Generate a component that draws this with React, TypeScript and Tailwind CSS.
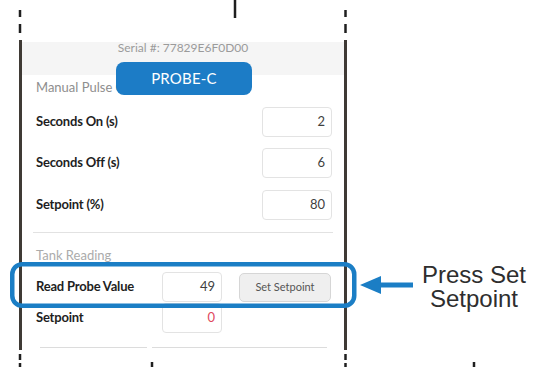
import React from "react";

const ui = { fontFamily: "Lato, 'Open Sans', sans-serif" };
const callout = { fontFamily: "'Liberation Sans', Arial, sans-serif" };

function Field({ value, red, w }: { value: string; red?: boolean; w: string }) {
  return (
    <div
      className={`${w} h-[30px] rounded-[4px] border border-[#e3e3e3] bg-white flex items-center justify-end pr-[6px] text-[13px] ${
        red ? "text-[#e0485e]" : "text-[#3f3f3f]"
      }`}
    >
      {value}
    </div>
  );
}

function Row({ label, value, mt }: { label: string; value: string; mt: string }) {
  return (
    <div className={`flex items-center justify-between h-[30px] pl-[14px] pr-[12px] ${mt}`}>
      <span className="text-[13px] font-bold text-[#1e1e1e] tracking-[-0.2px]">{label}</span>
      <Field value={value} w="w-[70px]" />
    </div>
  );
}

export default function App() {
  return (
    <div className="relative w-[543px] h-[367px] bg-white overflow-hidden flex items-start" style={ui}>
      {/* phone */}
      <div className="ml-[19px] mt-[40px] w-[328px] h-[310px] border-l-[3px] border-r-[3px] border-[#3f3a35] shrink-0">
        <div className="relative h-full">
          <div className="h-[2px]" />
          <div className="h-[33px] bg-[#f5f5f5] flex justify-center">
            <span className="text-[12px] leading-[12px] text-[#9b9b9b]">Serial #: 77829E6F0D00</span>
          </div>
          <div className="pt-[5px] pl-[14px] text-[13px] leading-[14px] text-[#8e8e8e]">Manual Pulse Control</div>
          <Row label="Seconds On (s)" value="2" mt="mt-[13px]" />
          <Row label="Seconds Off (s)" value="6" mt="mt-[11px]" />
          <Row label="Setpoint (%)" value="80" mt="mt-[12px]" />
          <div className="mt-[12px] mx-[11px] h-px bg-[#e2e2e2]" />
          <div className="mt-[15px] pl-[14px] text-[13px] leading-[14px] text-[#ababab]">Tank Reading</div>
          <div className="mt-[10px] flex items-center h-[30px] pl-[14px]">
            <span className="w-[126px] text-[13px] font-bold text-[#1e1e1e] tracking-[-0.2px]">Read Probe Value</span>
            <Field value="49" w="w-[60px]" />
            <div className="ml-[17px] w-[92px] h-[29px] rounded-[5px] border border-[#d6d6d6] bg-[#efefef] flex items-center justify-center text-[11px] text-[#555]">
              Set Setpoint
            </div>
          </div>
          <div className="mt-px flex items-center h-[30px] pl-[14px]">
            <span className="w-[126px] text-[13px] font-bold text-[#1e1e1e] tracking-[-0.2px]">Setpoint</span>
            <Field value="0" red w="w-[60px]" />
          </div>
          <div className="mt-[14px] flex">
            <div className="ml-[18px] w-[107px] h-px bg-[#dcdcdc]" />
            <div className="ml-[5px] w-[175px] h-px bg-[#dcdcdc]" />
          </div>

          {/* floating device tag */}
          <div className="absolute left-[94px] top-[22px] w-[136px] h-[33px] rounded-[8px] bg-[#1c7cc6] flex items-center justify-center text-white text-[15px] tracking-[0.2px]">
            PROBE-C
          </div>
        </div>
      </div>

      {/* callout text */}
      <div
        className="ml-[63px] mt-[263px] w-[128px] shrink-0 whitespace-nowrap text-center text-[24px] leading-[24px] text-[#2e2e2e]"
        style={callout}
      >
        <div>Press Set</div>
        <div>Setpoint</div>
      </div>

      {/* drawn marks: cut lines, highlight, arrow */}
      <svg className="absolute inset-0 pointer-events-none" width="543" height="367" viewBox="0 0 543 367">
        <g stroke="#1f1f1f" strokeWidth="2.5">
          <line x1="20" y1="10" x2="20" y2="17" />
          <line x1="20" y1="24" x2="20" y2="33" />
          <line x1="235" y1="0" x2="235" y2="18" />
          <line x1="345.5" y1="10" x2="345.5" y2="17" />
          <line x1="345.5" y1="24" x2="345.5" y2="33" />
          <line x1="20" y1="354" x2="20" y2="360" />
          <line x1="20" y1="363" x2="20" y2="367" />
          <line x1="152" y1="362" x2="152" y2="367" />
          <line x1="345.5" y1="354" x2="345.5" y2="360" />
          <line x1="345.5" y1="363" x2="345.5" y2="367" />
          <line x1="474" y1="362" x2="474" y2="367" />
        </g>
        <rect x="12.25" y="264.25" width="342" height="41.5" rx="10" fill="none" stroke="#1b7ec5" strokeWidth="4.5" />
        <rect x="376" y="282.5" width="37" height="5" fill="#1b7ec5" />
        <polygon points="360,285 381,276 381,294" fill="#1b7ec5" />
      </svg>
    </div>
  );
}
